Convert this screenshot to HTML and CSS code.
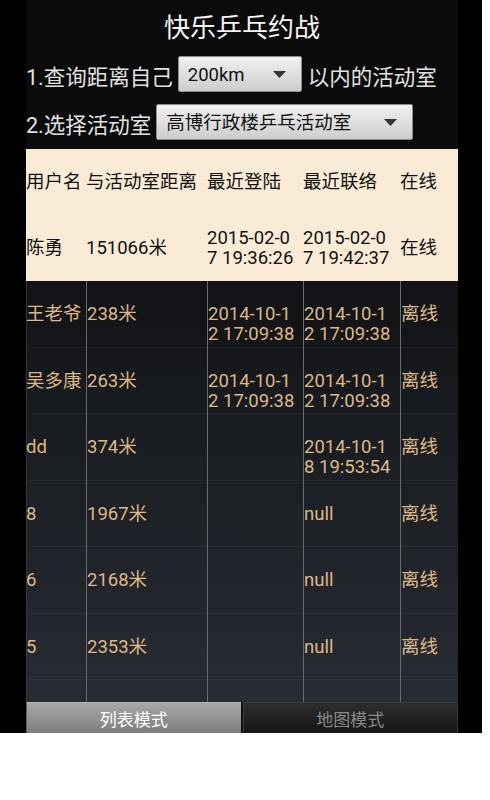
FILE: index.html
```html
<!DOCTYPE html>
<html lang="zh-CN">
<head>
<meta charset="utf-8">
<title>快乐乒乓约战</title>
<link rel="stylesheet" href="styles.css">
</head>
<body>
<div class="screen">
  <div class="app">
    <h1 class="title">快乐乒乓约战</h1>

    <div class="query-row">
      <span class="label">1.查询距离自己</span>
      <div class="spinner spinner-dist">
        <span class="spinner-text">200km</span>
        <svg class="arrow" width="13" height="7" viewBox="0 0 13 7"><path d="M0 0 H13 L6.5 7 Z" fill="#333"/></svg>
      </div>
      <span class="label">以内的活动室</span>
    </div>

    <div class="query-row row2">
      <span class="label">2.选择活动室</span>
      <div class="spinner spinner-room">
        <span class="spinner-text">高博行政楼乒乓活动室</span>
        <svg class="arrow" width="13" height="7" viewBox="0 0 13 7"><path d="M0 0 H13 L6.5 7 Z" fill="#333"/></svg>
      </div>
    </div>

    <div class="table">
      <div class="tr light-row">
        <div class="cell">用户名</div>
        <div class="cell">与活动室距离</div>
        <div class="cell">最近登陆</div>
        <div class="cell">最近联络</div>
        <div class="cell">在线</div>
      </div>
      <div class="tr light-row">
        <div class="cell">陈勇</div>
        <div class="cell">151066米</div>
        <div class="cell">2015-02-0<br>7 19:36:26</div>
        <div class="cell">2015-02-0<br>7 19:42:37</div>
        <div class="cell">在线</div>
      </div>

      <div class="tbody">
        <div class="tr dark-row">
          <div class="cell">王老爷</div>
          <div class="cell">238米</div>
          <div class="cell">2014-10-1<br>2 17:09:38</div>
          <div class="cell">2014-10-1<br>2 17:09:38</div>
          <div class="cell">离线</div>
        </div>
        <div class="tr dark-row">
          <div class="cell">吴多康</div>
          <div class="cell">263米</div>
          <div class="cell">2014-10-1<br>2 17:09:38</div>
          <div class="cell">2014-10-1<br>2 17:09:38</div>
          <div class="cell">离线</div>
        </div>
        <div class="tr dark-row">
          <div class="cell">dd</div>
          <div class="cell">374米</div>
          <div class="cell"></div>
          <div class="cell">2014-10-1<br>8 19:53:54</div>
          <div class="cell">离线</div>
        </div>
        <div class="tr dark-row">
          <div class="cell">8</div>
          <div class="cell">1967米</div>
          <div class="cell"></div>
          <div class="cell">null</div>
          <div class="cell">离线</div>
        </div>
        <div class="tr dark-row">
          <div class="cell">6</div>
          <div class="cell">2168米</div>
          <div class="cell"></div>
          <div class="cell">null</div>
          <div class="cell">离线</div>
        </div>
        <div class="tr dark-row">
          <div class="cell">5</div>
          <div class="cell">2353米</div>
          <div class="cell"></div>
          <div class="cell">null</div>
          <div class="cell">离线</div>
        </div>
        <div class="tr dark-row">
          <div class="cell"></div>
          <div class="cell"></div>
          <div class="cell"></div>
          <div class="cell"></div>
          <div class="cell"></div>
        </div>
      </div>
    </div>

    <div class="tabs">
      <div class="tab active">列表模式</div>
      <div class="tab">地图模式</div>
    </div>
  </div>
</div>
</body>
</html>
```

FILE: styles.css
```css
html, body {
  margin: 0;
  padding: 0;
  background: #ffffff;
}

.screen {
  width: 482px;
  height: 733px;
  background: #000000;
  padding: 0 24px 0 26px;
  box-sizing: border-box;
}

.app {
  width: 432px;
  height: 733px;
  background: #0b0b0c;
  display: flex;
  flex-direction: column;
  font-family: Roboto, "Noto Sans CJK SC", sans-serif;
  overflow: hidden;
}

.title {
  margin: 0;
  height: 56px;
  line-height: 56px;
  text-align: center;
  font-size: 26px;
  font-weight: normal;
  color: #f4f4f4;
}

.query-row {
  display: flex;
  align-items: center;
  height: 36px;
}

.row2 {
  margin-top: 12px;
}

.label {
  font-size: 21.5px;
  line-height: 24px;
  padding-top: 8px;
  color: #e2e2e2;
  white-space: nowrap;
}

.spinner {
  height: 36px;
  box-sizing: border-box;
  margin: 0 6px 0 5px;
  padding: 2px 15px 0 9px;
  background: linear-gradient(#f0f0f0, #cdcdcd);
  border: 1px solid #8c8c8c;
  border-radius: 2px;
  display: flex;
  align-items: center;
  justify-content: space-between;
  color: #111;
  font-size: 18.5px;
  line-height: 22px;
  white-space: nowrap;
}

.spinner-dist {
  width: 124px;
}

.spinner-room {
  width: 257px;
}

.arrow {
  flex: none;
  margin-top: -2px;
}

.table {
  margin-top: 9px;
  display: flex;
  flex-direction: column;
}

.tr {
  display: grid;
  grid-template-columns: 60px 121px 96px 97px 58px;
}

.cell {
  font-size: 18.5px;
  line-height: 20px;
  white-space: nowrap;
}

.light-row {
  height: 66px;
  background: #faebd7;
  color: #111;
  align-items: center;
}

.tbody {
  height: 421px;
  overflow: hidden;
  background: linear-gradient(#111316, #282c33);
  box-shadow: inset 1px 0 #34373c;
}

.dark-row {
  height: 66.5px;
  color: #deb887;
  box-shadow: inset 0 -1px rgba(255, 255, 255, 0.045);
}

.dark-row .cell {
  padding-top: 23px;
}

.dark-row .cell + .cell {
  border-left: 1px solid #6a6b6d;
}

.tabs {
  display: flex;
  gap: 2px;
  height: 31px;
  background: #121212;
}

.tab {
  flex: 1;
  height: 31px;
  box-sizing: border-box;
  padding-top: 4px;
  line-height: 27px;
  text-align: center;
  font-size: 17px;
  color: #8a8a8a;
  background: linear-gradient(#2e2e2e, #151515);
  border: 1px solid #393939;
  border-bottom: none;
}

.tab.active {
  color: #ffffff;
  background: linear-gradient(#a7a7a7, #7d7d7d);
  border: none;
  border-top: 1px solid #b4b4b4;
  border-left: 1px solid #5a5a5a;
}
```
